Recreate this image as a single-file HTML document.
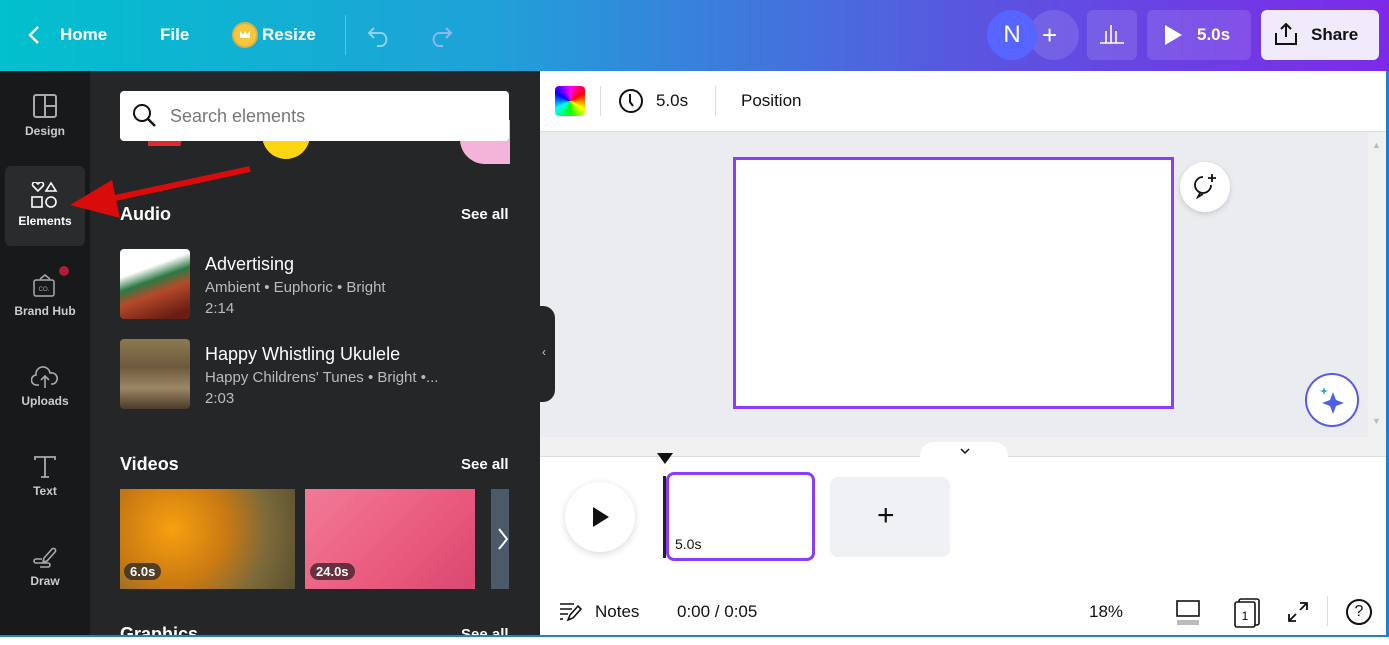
<!DOCTYPE html>
<html><head><meta charset="utf-8"><style>
*{margin:0;padding:0;box-sizing:border-box}
body{width:1389px;height:637px;overflow:hidden;font-family:"Liberation Sans",sans-serif;position:relative;background:#fff}
.a{position:absolute}
.hdr{left:0;top:0;width:1389px;height:71px;background:linear-gradient(90deg,#02c0cd 0%,#1fa2d8 35%,#5a55e0 70%,#7d2ae8 100%)}
.ht{color:#fff;font-weight:bold;font-size:17px;top:25px}
.side{left:0;top:71px;width:90px;height:566px;background:#18191b}
.panel{left:90px;top:71px;width:450px;height:566px;background:#252627}
.si{width:90px;text-align:center;color:#ccc;font-size:12px;font-weight:bold}
.wt{color:#fff}
.gr{color:#bbb}
</style></head><body>
<div class="a hdr"></div>
<svg class="a" style="left:26px;top:24px" width="16" height="22"><path d="M12 3L4 11l8 8" stroke="#fff" stroke-width="2.4" fill="none"/></svg>
<div class="a ht" style="left:60px">Home</div>
<div class="a ht" style="left:160px">File</div>
<div class="a" style="left:234px;top:24px;width:22px;height:22px;border-radius:50%;background:#f7c63f;box-shadow:0 0 0 2px #d9b04a"></div>
<div class="a" style="left:240px;top:31px;width:10px;height:7px;background:#fff;clip-path:polygon(0 0,30% 50%,50% 0,70% 50%,100% 0,100% 100%,0 100%)"></div>
<div class="a ht" style="left:262px">Resize</div>
<div class="a" style="left:345px;top:15px;width:1px;height:40px;background:rgba(255,255,255,.3)"></div>
<svg class="a" style="left:366px;top:22px" width="30" height="26"><path d="M8 6L3 11l5 5M3 11h13a7 7 0 010 13h-5" stroke="#8fd1ea" stroke-width="2" fill="none"/></svg>
<svg class="a" style="left:424px;top:22px" width="30" height="26"><path d="M22 6l5 5-5 5M27 11H14a7 7 0 000 13h5" stroke="#8fb7ea" stroke-width="2" fill="none"/></svg>
<div class="a" style="left:1029px;top:10px;width:50px;height:50px;border-radius:50%;background:rgba(255,255,255,.12)"></div>
<div class="a" style="left:987px;top:10px;width:50px;height:50px;border-radius:50%;background:#5864ff;color:#fff;font-size:24px;text-align:center;line-height:50px">N</div>
<div class="a" style="left:1042px;top:20px;color:#fff;font-size:26px">+</div>
<div class="a" style="left:1087px;top:10px;width:50px;height:50px;border-radius:6px;background:rgba(255,255,255,.12)"></div>
<svg class="a" style="left:1099px;top:22px" width="26" height="24"><path d="M1 21h24M7 21V9M12 21V3M17 21V9" stroke="#fff" stroke-width="1.6" fill="none"/></svg>
<div class="a" style="left:1147px;top:10px;width:104px;height:50px;border-radius:6px;background:rgba(255,255,255,.12)"></div>
<svg class="a" style="left:1163px;top:24px" width="20" height="22"><path d="M2 1l17 10L2 21z" fill="#fff"/></svg>
<div class="a ht" style="left:1197px">5.0s</div>
<div class="a" style="left:1261px;top:10px;width:118px;height:50px;border-radius:6px;background:#f1eafc"></div>
<svg class="a" style="left:1273px;top:21px" width="26" height="26"><path d="M13 16V3M8 8l5-5 5 5M3 12v11h20V12" stroke="#111" stroke-width="2" fill="none"/></svg>
<div class="a" style="left:1311px;top:25px;font-size:17px;color:#111;font-weight:bold">Share</div>

<div class="a side"></div>
<div class="a panel"></div>
<div class="a" style="left:5px;top:166px;width:80px;height:80px;border-radius:6px;background:#2a2b2d"></div>
<svg class="a" style="left:33px;top:94px" width="24" height="24"><rect x="1" y="1" width="22" height="22" rx="2" stroke="#aaa" stroke-width="2" fill="none"/><path d="M12 1v22M12 12h11" stroke="#aaa" stroke-width="2"/></svg>
<div class="a si" style="top:124px">Design</div>
<svg class="a" style="left:30px;top:182px" width="30" height="28"><path d="M8 9l-5-5a2.5 2.5 0 014-3l1 1 1-1a2.5 2.5 0 014 3z" stroke="#fff" stroke-width="1.6" fill="none"/><path d="M21 1l5 8h-10z" stroke="#fff" stroke-width="1.6" fill="none"/><rect x="2" y="15" width="10" height="10" stroke="#fff" stroke-width="1.6" fill="none"/><circle cx="21" cy="20" r="5" stroke="#fff" stroke-width="1.6" fill="none"/></svg>
<div class="a si wt" style="top:214px">Elements</div>
<svg class="a" style="left:32px;top:272px" width="26" height="26"><path d="M8 7l5-4 5 4" stroke="#aaa" stroke-width="1.5" fill="none"/><rect x="2" y="8" width="20" height="16" rx="2" stroke="#aaa" stroke-width="1.5" fill="none"/><text x="12" y="19" font-size="6" fill="#aaa" text-anchor="middle" font-family="Liberation Sans">CO.</text></svg>
<div class="a" style="left:59px;top:266px;width:10px;height:10px;border-radius:50%;background:#b01c3a"></div>
<div class="a si" style="top:304px">Brand Hub</div>
<svg class="a" style="left:31px;top:364px" width="28" height="26"><path d="M8 21H6a5 5 0 01-1-10 7 7 0 0114-2 5 5 0 013 11h-2M14 24V12M10 16l4-4 4 4" stroke="#aaa" stroke-width="1.6" fill="none"/></svg>
<div class="a si" style="top:394px">Uploads</div>
<svg class="a" style="left:34px;top:455px" width="22" height="24"><path d="M1 5V2h20v3M11 2v20M7 22h8" stroke="#aaa" stroke-width="1.8" fill="none"/></svg>
<div class="a si" style="top:484px">Text</div>
<svg class="a" style="left:32px;top:543px" width="26" height="26"><path d="M12 15l8-9a2 2 0 013 3l-8 9-4 1z M10 16H4a2 2 0 000 4h12a2 2 0 010 4H8" stroke="#aaa" stroke-width="1.6" fill="none"/></svg>
<div class="a si" style="top:574px">Draw</div>

<div class="a" style="left:148px;top:130px;width:36px;height:16px;background:#e32a2a;clip-path:polygon(0 0,100% 0,90% 100%,0 100%)"></div>
<div class="a" style="left:262px;top:125px;width:48px;height:34px;border-radius:0 0 24px 24px;background:#fcd611"></div>
<div class="a" style="left:460px;top:120px;width:50px;height:44px;border-radius:0 0 0 25px;background:#f4b3d8"></div>
<div class="a" style="left:120px;top:91px;width:389px;height:50px;background:#fff;border-radius:4px"></div>
<svg class="a" style="left:132px;top:103px" width="26" height="26"><circle cx="10" cy="10" r="8" stroke="#111" stroke-width="2" fill="none"/><path d="M16 16l7 7" stroke="#111" stroke-width="2.4"/></svg>
<div class="a" style="left:170px;top:106px;font-size:18px;color:#777">Search elements</div>

<!-- arrow -->
<svg class="a" style="left:60px;top:160px" width="200" height="70"><path d="M190 9L55 38" stroke="#d90b0b" stroke-width="6"/><path d="M10 45L52 20 60 58z" fill="#d90b0b"/></svg>

<div class="a wt" style="left:120px;top:204px;font-size:18px;font-weight:bold">Audio</div>
<div class="a wt" style="left:461px;top:206px;font-size:15px;font-weight:bold">See all</div>
<div class="a" style="left:120px;top:249px;width:70px;height:70px;border-radius:4px;background:linear-gradient(160deg,#fff 30%,#2c7a45 45%,#b44a2a 60%,#6a1d14 90%)"></div>
<div class="a wt" style="left:205px;top:254px;font-size:18px">Advertising</div>
<div class="a gr" style="left:205px;top:279px;font-size:15px">Ambient • Euphoric • Bright</div>
<div class="a gr" style="left:205px;top:300px;font-size:15px">2:14</div>
<div class="a" style="left:120px;top:339px;width:70px;height:70px;border-radius:4px;background:linear-gradient(180deg,#8a7a50,#6d5a3e 40%,#9b8766 70%,#4a3a28)"></div>
<div class="a wt" style="left:205px;top:344px;font-size:18px">Happy Whistling Ukulele</div>
<div class="a gr" style="left:205px;top:369px;font-size:15px">Happy Childrens' Tunes • Bright •...</div>
<div class="a gr" style="left:205px;top:390px;font-size:15px">2:03</div>
<div class="a wt" style="left:120px;top:454px;font-size:18px;font-weight:bold">Videos</div>
<div class="a wt" style="left:461px;top:456px;font-size:15px;font-weight:bold">See all</div>
<div class="a" style="left:120px;top:489px;width:175px;height:100px;background:radial-gradient(circle at 30% 40%,#f8a010,#c97a12 40%,#7b6a3a 70%,#5a5030)"></div>
<div class="a" style="left:305px;top:489px;width:170px;height:100px;background:linear-gradient(135deg,#f27a98,#e95a7d 60%,#d84870)"></div>
<div class="a" style="left:491px;top:489px;width:18px;height:100px;background:#4b5968"></div>
<svg class="a" style="left:497px;top:527px" width="12" height="24"><path d="M2 2l8 10-8 10" stroke="#fff" stroke-width="2" fill="none"/></svg>
<div class="a" style="left:124px;top:563px;padding:1px 6px;border-radius:10px;background:rgba(40,40,40,.75);color:#fff;font-size:13px;font-weight:bold">6.0s</div>
<div class="a" style="left:310px;top:563px;padding:1px 6px;border-radius:10px;background:rgba(60,30,40,.75);color:#fff;font-size:13px;font-weight:bold">24.0s</div>
<div class="a wt" style="left:120px;top:624px;font-size:18px;font-weight:bold">Graphics</div>
<div class="a wt" style="left:461px;top:626px;font-size:15px;font-weight:bold">See all</div>

<!-- right -->
<div class="a" style="left:540px;top:71px;width:849px;height:61px;background:#fff;border-bottom:1px solid #ddd"></div>
<div class="a" style="left:555px;top:86px;width:30px;height:30px;border-radius:4px;background:conic-gradient(#f0f,#f00,#ff0,#0f0,#0ff,#00f,#f0f)"></div>
<div class="a" style="left:600px;top:86px;width:1px;height:30px;background:#ddd"></div>
<svg class="a" style="left:618px;top:88px" width="26" height="26"><circle cx="13" cy="13" r="11" stroke="#111" stroke-width="2" fill="none"/><path d="M12 6v8l3 4" stroke="#111" stroke-width="2" fill="none"/></svg>
<div class="a" style="left:656px;top:91px;font-size:17px;color:#111">5.0s</div>
<div class="a" style="left:715px;top:86px;width:1px;height:30px;background:#ddd"></div>
<div class="a" style="left:741px;top:91px;font-size:17px;color:#111">Position</div>
<div class="a" style="left:540px;top:132px;width:828px;height:305px;background:#ebecf0"></div>
<div class="a" style="left:1368px;top:132px;width:21px;height:305px;background:#f0f0f0"></div>
<div class="a" style="left:1372px;top:140px;color:#bbb;font-size:9px">▲</div>
<div class="a" style="left:1372px;top:416px;color:#bbb;font-size:9px">▼</div>
<div class="a" style="left:540px;top:437px;width:849px;height:20px;background:#f1f1f1;border-bottom:1px solid #ddd"></div>
<div class="a" style="left:920px;top:442px;width:88px;height:16px;border-radius:14px 14px 0 0;background:#fff"></div>
<svg class="a" style="left:959px;top:447px" width="12" height="8"><path d="M2 2l4 4 4-4" stroke="#111" stroke-width="1.5" fill="none"/></svg>
<div class="a" style="left:733px;top:157px;width:441px;height:252px;border:3px solid #8b3dff;background:#fff"></div>
<div class="a" style="left:1180px;top:162px;width:50px;height:50px;border-radius:50%;background:#fff;box-shadow:0 2px 6px rgba(0,0,0,.15)"></div>
<svg class="a" style="left:1191px;top:172px" width="30" height="30"><path d="M20 13a8 8 0 11-8-8M9 21l-2 4 5-3" stroke="#111" stroke-width="1.8" fill="none"/><path d="M21 2v8M17 6h8" stroke="#111" stroke-width="1.8"/></svg>
<div class="a" style="left:1305px;top:373px;width:54px;height:54px;border-radius:50%;background:#fff;border:2px solid #5a5ae8"></div>
<svg class="a" style="left:1318px;top:386px" width="28" height="28"><path d="M15 6l3 8 8 3-8 3-3 8-3-8-8-3 8-3z" fill="#4d5fe6"/><path d="M6 1l1 3 3 1-3 1-1 3-1-3-3-1 3-1z" fill="#2aa0d8"/></svg>
<div class="a" style="left:540px;top:306px;width:15px;height:96px;background:#252627;border-radius:0 12px 12px 0"></div>
<div class="a" style="left:542px;top:345px;color:#ccc;font-size:12px">‹</div>

<!-- timeline -->
<div class="a" style="left:565px;top:482px;width:70px;height:70px;border-radius:50%;background:#fff;box-shadow:0 2px 8px rgba(0,0,0,.15)"></div>
<svg class="a" style="left:591px;top:505px" width="20" height="24"><path d="M2 2l16 10L2 22z" fill="#111"/></svg>
<svg class="a" style="left:656px;top:451px" width="18" height="14"><path d="M1 2h16L9 13z" fill="#111"/></svg>
<div class="a" style="left:663px;top:476px;width:3px;height:82px;background:#222"></div>
<div class="a" style="left:666px;top:472px;width:149px;height:89px;border:3px solid #8b3dff;border-radius:8px;background:#fff"></div>
<div class="a" style="left:675px;top:536px;font-size:14px;color:#111">5.0s</div>
<div class="a" style="left:830px;top:477px;width:120px;height:80px;border-radius:8px;background:#f0f1f4"></div>
<div class="a" style="left:877px;top:499px;font-size:30px;color:#111;font-weight:300">+</div>
<svg class="a" style="left:558px;top:601px" width="26" height="22"><path d="M2 3h14M2 8h12M2 13h8M2 18h3M10 19l2-5 8-9 3 3-8 9z" stroke="#111" stroke-width="1.6" fill="none"/></svg>
<div class="a" style="left:595px;top:602px;font-size:17px;color:#111">Notes</div>
<div class="a" style="left:677px;top:602px;font-size:17px;color:#111">0:00 / 0:05</div>
<div class="a" style="left:1089px;top:602px;font-size:17px;color:#111">18%</div>
<svg class="a" style="left:1175px;top:600px" width="26" height="26"><rect x="2" y="1" width="22" height="15" stroke="#111" stroke-width="1.6" fill="none"/><path d="M2 20h22v5H2z" fill="#bbb"/></svg>
<svg class="a" style="left:1233px;top:598px" width="28" height="30"><rect x="6" y="1" width="20" height="26" rx="2" stroke="#111" stroke-width="1.6" fill="none"/><rect x="2" y="4" width="20" height="25" rx="2" stroke="#111" stroke-width="1.6" fill="#fff"/><text x="12" y="22" font-size="12" text-anchor="middle" font-family="Liberation Sans">1</text></svg>
<svg class="a" style="left:1286px;top:600px" width="24" height="24"><path d="M14 3h7v7M21 3l-7 7M10 21H3v-7M3 21l7-7" stroke="#111" stroke-width="1.8" fill="none"/></svg>
<div class="a" style="left:1327px;top:596px;width:1px;height:30px;background:#ddd"></div>
<div class="a" style="left:1346px;top:599px;width:26px;height:26px;border-radius:50%;border:2px solid #111;text-align:center;font-size:16px;line-height:22px;color:#111">?</div>
<div class="a" style="left:1386px;top:71px;width:3px;height:566px;background:#1f7fd0"></div>
<div class="a" style="left:0;top:635px;width:1389px;height:2px;background:#1f7fd0"></div>
</body></html>
